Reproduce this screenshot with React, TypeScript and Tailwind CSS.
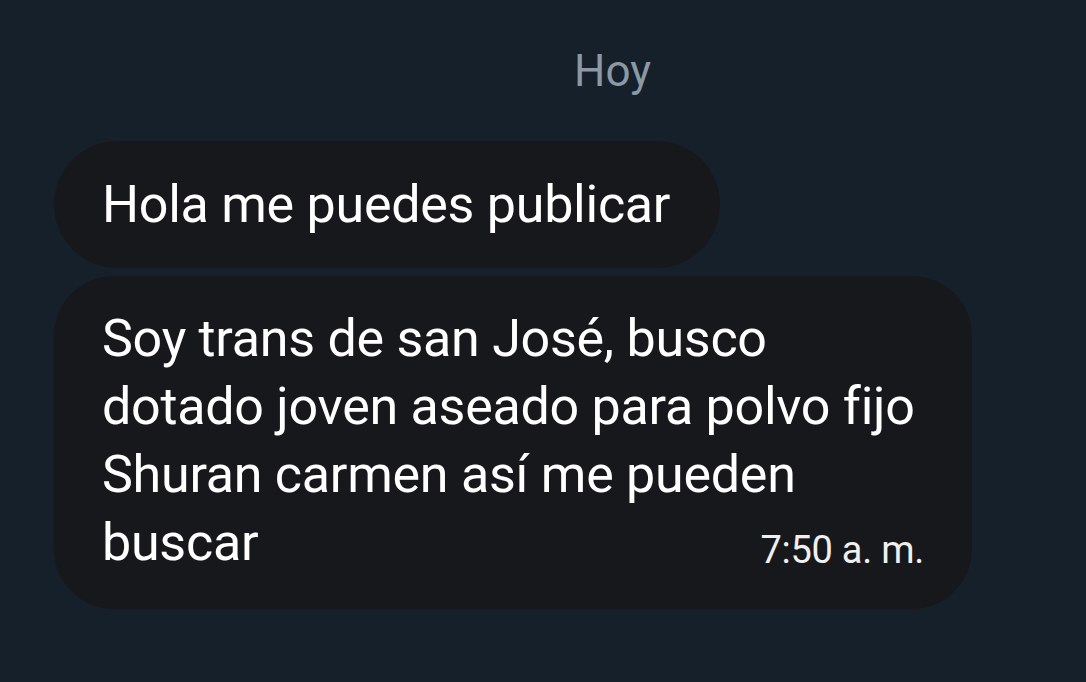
export default function App() {
  return (
    <div
      className="w-[1086px] h-[682px] bg-[#16202b] overflow-hidden"
      style={{ fontFamily: "Roboto, 'Noto Sans', sans-serif" }}
    >
      {/* day separator */}
      <div className="pt-[43px] pl-[574px] text-[44px] leading-[56px] text-[#8b98a5]">
        Hoy
      </div>

      <div className="mt-[42px] pl-[54px] flex flex-col items-start gap-[8px]">
        <div className="bg-[#17181c] rounded-[64px] pl-[48px] pr-[50px] pt-[30px] pb-[29px] text-white text-[52px] leading-[68px] tracking-[-0.005em]">
          Hola me puedes publicar
        </div>

        <div className="w-[918px] bg-[#17181c] rounded-[60px] pl-[48px] pr-[48px] pt-[29px] pb-[25px] text-white text-[52px] leading-[68px] tracking-[-0.005em]">
          Soy trans de san José, busco
          <br />
          dotado joven aseado para polvo fijo
          <br />
          Shuran carmen así me pueden
          <br />
          buscar
          <span className="float-right mt-[7px] text-[38px] leading-[68px] text-[#f0f0f0]">
            7:50 a. m.
          </span>
        </div>
      </div>
    </div>
  );
}
